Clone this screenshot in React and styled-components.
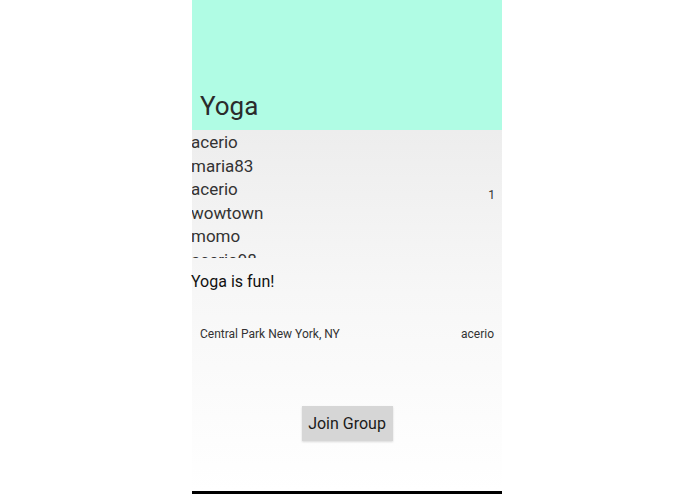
import React from "react";
import styled, { createGlobalStyle } from "styled-components";

const GlobalStyle = createGlobalStyle`
  html, body { margin: 0; padding: 0; background: #fff; }
  body { font-family: Roboto, "Noto Sans", sans-serif; }
`;

const members = ["acerio", "maria83", "acerio", "wowtown", "momo", "acerio98"];

const App = () => {
  return (
    <>
      <GlobalStyle />
      <Page>
        <Phone>
          <Header>
            <Title>Yoga</Title>
          </Header>
          <Body>
            <MemberRow>
              <MemberList>
                {members.map((m, i) => (
                  <Member key={i}>{m}</Member>
                ))}
              </MemberList>
              <Count>1</Count>
            </MemberRow>
            <Description>Yoga is fun!</Description>
            <InfoRow>
              <Small>Central Park New York, NY</Small>
              <Small>acerio</Small>
            </InfoRow>
            <ButtonWrap>
              <JoinBtn>Join Group</JoinBtn>
            </ButtonWrap>
          </Body>
          <NavBar />
        </Phone>
      </Page>
    </>
  );
};
export default App;

const Page = styled.div`
  width: 695px;
  height: 494px;
  display: flex;
  justify-content: center;
  padding-right: 1px;
  box-sizing: border-box;
`;

const Phone = styled.div`
  width: 310px;
  height: 494px;
  display: flex;
  flex-direction: column;
`;

const Header = styled.div`
  height: 130px;
  background-color: #b0fce4;
  display: flex;
  align-items: flex-end;
  padding: 0 0 9px 8px;
  box-sizing: border-box;
`;

const Title = styled.h1`
  margin: 0;
  font-size: 26px;
  font-weight: 400;
  color: #2b2b2b;
`;

const Body = styled.div`
  flex: 1;
  display: flex;
  flex-direction: column;
  background: linear-gradient(#ededed, #f7f7f7 45%, #ffffff);
`;

const MemberRow = styled.div`
  display: flex;
  align-items: center;
  height: 128px;
`;

const MemberList = styled.div`
  flex: 1;
  height: 128px;
  padding-top: 1px;
  box-sizing: border-box;
  overflow: hidden;
`;

const Member = styled.div`
  font-size: 17px;
  line-height: 23.5px;
  color: #333;
  margin-left: -1px;
`;

const Count = styled.span`
  font-size: 12px;
  color: #333;
  padding-right: 7px;
  margin-top: 2px;
`;

const Description = styled.p`
  margin: 13px 0 0;
  font-size: 16px;
  line-height: 22px;
  color: #111;
  margin-left: -1px;
`;

const InfoRow = styled.div`
  display: flex;
  justify-content: space-between;
  padding: 0 8px;
  margin-top: 33px;
`;

const Small = styled.span`
  font-size: 12px;
  line-height: 16px;
  color: #333;
`;

const ButtonWrap = styled.div`
  display: flex;
  justify-content: center;
  margin-top: 64px;
`;

const JoinBtn = styled.button`
  width: 91px;
  height: 35px;
  border: none;
  background-color: #d6d6d6;
  box-shadow: 0 1px 2px rgba(0, 0, 0, 0.15);
  font-family: Roboto, "Noto Sans", sans-serif;
  font-size: 16px;
  color: #1a1a1a;
  padding: 0;
`;

const NavBar = styled.div`
  height: 3px;
  background-color: #000;
  margin-top: auto;
`;
